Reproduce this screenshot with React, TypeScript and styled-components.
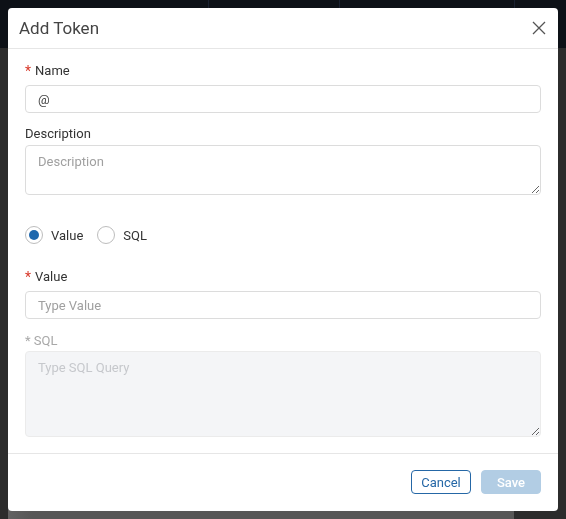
import React from "react";
import styled, { createGlobalStyle } from "styled-components";

const Global = createGlobalStyle`
  html, body { margin: 0; padding: 0; }
  body {
    font-family: Roboto, "Liberation Sans", Arial, sans-serif;
    background: #2b2b2b;
    overflow: hidden;
  }
  * { box-sizing: border-box; }
`;

const Page = styled.div`
  display: grid;
  grid-template-rows: 48px 1fr;
  width: 100vw;
  height: 100vh;
`;

const TopBar = styled.div`
  display: flex;
  background: #0d1117;
`;

const TopSection = styled.div<{ $w: number }>`
  width: ${(p) => p.$w}px;
  border-right: 1px solid #1a2130;
`;

const Main = styled.div`
  display: flex;
  align-items: flex-end;
  padding-left: 8px;
  background: #2c2c2c;
`;

const Panel = styled.div`
  width: 506px;
  height: 60px;
  background: linear-gradient(90deg, #626262 0px, #575757 24px, #575757 100%);
`;

const Overlay = styled.div`
  position: fixed;
  inset: 0;
  padding: 8px;
  display: flex;
  align-items: flex-start;
`;

const Modal = styled.div`
  width: 550px;
  height: 503px;
  background: #ffffff;
  border-radius: 4px;
  display: flex;
  flex-direction: column;
  overflow: hidden;
`;

const Header = styled.div`
  height: 41px;
  flex: none;
  display: flex;
  align-items: center;
  justify-content: space-between;
  padding: 0 9px 0 11px;
  border-bottom: 1px solid #e6e6e6;
`;

const Title = styled.h2`
  margin: 0;
  font-size: 17px;
  font-weight: 400;
  color: #444;
  line-height: 20px;
`;

const CloseButton = styled.button`
  width: 20px;
  height: 20px;
  border: none;
  background: none;
  padding: 0;
  display: flex;
  align-items: center;
  justify-content: center;
  cursor: pointer;
`;

const Body = styled.div`
  flex: 1;
  padding: 14px 17px 16px 17px;
  display: flex;
  flex-direction: column;
`;

const Field = styled.div<{ $mb: number }>`
  display: flex;
  flex-direction: column;
  margin-bottom: ${(p) => p.$mb}px;
`;

const Label = styled.label<{ $disabled?: boolean; $gap?: number }>`
  font-size: 13px;
  line-height: 16px;
  color: ${(p) => (p.$disabled ? "#a8a8a8" : "#333")};
  margin-bottom: ${(p) => p.$gap ?? 6}px;
  display: flex;
  align-items: center;
  gap: 4px;
`;

const Star = styled.span`
  color: #d8392b;
  font-size: 14px;
  line-height: 16px;
`;

const TextInput = styled.input`
  height: 28px;
  width: 100%;
  border: 1px solid #dcdcdc;
  border-radius: 4px;
  padding: 0 12px;
  font-family: inherit;
  font-size: 13px;
  color: #444;
  background: #fff;
  outline: none;
  &::placeholder { color: #a0a0a0; }
`;

const TextArea = styled.textarea<{ $h: number; $disabled?: boolean }>`
  display: block;
  height: ${(p) => p.$h}px;
  width: 100%;
  border: 1px solid ${(p) => (p.$disabled ? "#ebebeb" : "#dcdcdc")};
  border-radius: 4px;
  padding: 8px 12px;
  font-family: inherit;
  font-size: 13px;
  line-height: 16px;
  color: #444;
  background: ${(p) => (p.$disabled ? "#f4f5f7" : "#fff")};
  outline: none;
  resize: vertical;
  &::placeholder { color: ${(p) => (p.$disabled ? "#c6c8cc" : "#a0a0a0")}; }
`;

const RadioRow = styled.div`
  display: flex;
  align-items: center;
  gap: 14px;
  margin-top: 31px;
  margin-bottom: 25px;
  height: 18px;
`;

const RadioOption = styled.label`
  display: flex;
  align-items: center;
  gap: 8px;
  font-size: 13px;
  color: #333;
  cursor: pointer;
`;

const RadioCircle = styled.span<{ $checked?: boolean }>`
  width: 18px;
  height: 18px;
  border-radius: 50%;
  border: 1px solid #bdbdbd;
  display: flex;
  align-items: center;
  justify-content: center;
  background: #fff;
  &::after {
    content: "";
    width: 10px;
    height: 10px;
    border-radius: 50%;
    background: ${(p) => (p.$checked ? "#1f68ad" : "transparent")};
  }
`;

const Footer = styled.div`
  height: 58px;
  flex: none;
  border-top: 1px solid #e6e6e6;
  display: flex;
  justify-content: flex-end;
  align-items: flex-start;
  gap: 10px;
  padding: 16px 17px 0 0;
`;

const Button = styled.button<{ $primary?: boolean }>`
  width: 60px;
  height: 24px;
  border-radius: 4px;
  font-family: inherit;
  font-size: 13px;
  padding: 0;
  cursor: pointer;
  border: 1px solid ${(p) => (p.$primary ? "#b2cde4" : "#2567a6")};
  background: ${(p) => (p.$primary ? "#b2cde4" : "#fff")};
  color: ${(p) => (p.$primary ? "#ffffff" : "#2567a6")};
  font-weight: ${(p) => (p.$primary ? 500 : 400)};
`;

export default function App() {
  return (
    <>
      <Global />
      <Page>
        <TopBar>
          <TopSection $w={209} />
          <TopSection $w={131} />
          <TopSection $w={175} />
        </TopBar>
        <Main>
          <Panel />
        </Main>
      </Page>
      <Overlay>
        <Modal>
          <Header>
            <Title>Add Token</Title>
            <CloseButton aria-label="Close">
              <svg width="14" height="14" viewBox="0 0 14 14">
                <path d="M1 1 L13 13 M13 1 L1 13" stroke="#555" strokeWidth="1.3" fill="none" />
              </svg>
            </CloseButton>
          </Header>
          <Body>
            <Field $mb={13}>
              <Label>
                <Star>*</Star>Name
              </Label>
              <TextInput defaultValue="@" />
            </Field>
            <Field $mb={0}>
              <Label $gap={3}>Description</Label>
              <TextArea $h={50} placeholder="Description" />
            </Field>
            <RadioRow>
              <RadioOption>
                <RadioCircle $checked />
                Value
              </RadioOption>
              <RadioOption>
                <RadioCircle />
                SQL
              </RadioOption>
            </RadioRow>
            <Field $mb={14}>
              <Label>
                <Star>*</Star>Value
              </Label>
              <TextInput placeholder="Type Value" />
            </Field>
            <Field $mb={0}>
              <Label $disabled $gap={2}>* SQL</Label>
              <TextArea $h={86} $disabled readOnly placeholder="Type SQL Query" />
            </Field>
          </Body>
          <Footer>
            <Button>Cancel</Button>
            <Button $primary>Save</Button>
          </Footer>
        </Modal>
      </Overlay>
    </>
  );
}
